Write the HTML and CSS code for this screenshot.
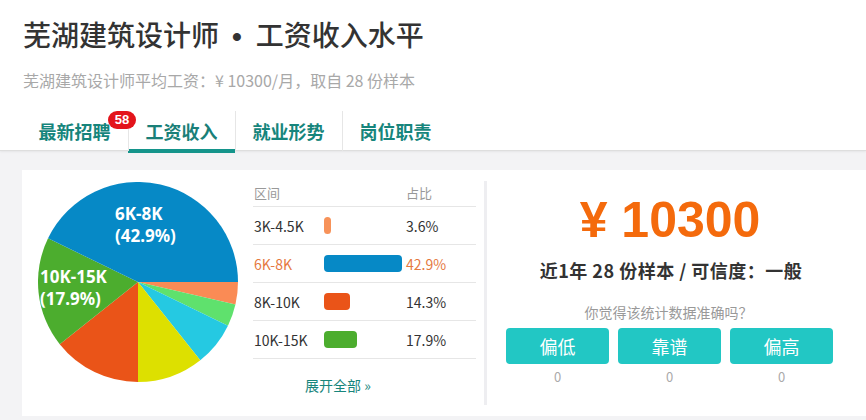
FILE: index.html
```html
<!DOCTYPE html>
<html lang="zh-CN">
<head>
<meta charset="utf-8">
<title>芜湖建筑设计师 • 工资收入水平</title>
<link rel="stylesheet" href="styles.css">
</head>
<body>
<header class="header">
  <h1 class="title">芜湖建筑设计师<span class="dot">•</span>工资收入水平</h1>
  <p class="subtitle">芜湖建筑设计师平均工资：¥ 10300/月，取自 28 份样本</p>
  <nav class="tabs">
    <a class="tab">最新招聘<span class="badge">58</span></a>
    <a class="tab tab-sep active">工资收入</a>
    <a class="tab tab-sep">就业形势</a>
    <a class="tab tab-sep">岗位职责</a>
  </nav>
</header>
<main class="card">
  <svg class="pie" width="200" height="200" viewBox="0 0 200 200">
    <path d="M100 100 L200 100 A100 100 0 0 1 197.44 122.5 Z" fill="#fa8b55"/>
    <path d="M100 100 L197.44 122.5 A100 100 0 0 1 189.96 143.68 Z" fill="#5fe16d"/>
    <path d="M100 100 L189.96 143.68 A100 100 0 0 1 162.25 178.26 Z" fill="#25c9e2"/>
    <path d="M100 100 L162.25 178.26 A100 100 0 0 1 100 200 Z" fill="#dde000"/>
    <path d="M100 100 L100 200 A100 100 0 0 1 21.74 162.25 Z" fill="#ea5418"/>
    <path d="M100 100 L21.74 162.25 A100 100 0 0 1 10.04 56.32 Z" fill="#4cad2e"/>
    <path d="M100 100 L10.04 56.32 A100 100 0 0 1 200 100 Z" fill="#0689c6"/>
    <text class="pie-label" x="77" y="38">6K-8K</text>
    <text class="pie-label" x="77" y="60">(42.9%)</text>
    <text class="pie-label" x="2" y="101">10K-15K</text>
    <text class="pie-label" x="2" y="123">(17.9%)</text>
  </svg>
  <section class="dist">
    <div class="row head"><span>区间</span><span></span><span>占比</span></div>
    <div class="row"><span>3K-4.5K</span><span><i class="bar" style="width:7px;background:#f79259"></i></span><span>3.6%</span></div>
    <div class="row hl"><span>6K-8K</span><span><i class="bar" style="width:78px;background:#0689c6"></i></span><span>42.9%</span></div>
    <div class="row"><span>8K-10K</span><span><i class="bar" style="width:26px;background:#ea5418"></i></span><span>14.3%</span></div>
    <div class="row"><span>10K-15K</span><span><i class="bar" style="width:33px;background:#4cad2e"></i></span><span>17.9%</span></div>
    <a class="more">展开全部 »</a>
  </section>
  <section class="summary">
    <div class="price">¥ 10300</div>
    <div class="meta">近1年 28 份样本 / 可信度：一般</div>
    <div class="ask">你觉得该统计数据准确吗？</div>
    <div class="votes">
      <div class="vote"><button class="btn">偏低</button><span class="count">0</span></div>
      <div class="vote"><button class="btn">靠谱</button><span class="count">0</span></div>
      <div class="vote"><button class="btn">偏高</button><span class="count">0</span></div>
    </div>
  </section>
</main>
</body>
</html>
```
FILE: styles.css
```css
* { box-sizing: border-box; }
html, body { margin: 0; padding: 0; }
body {
  background: #f3f3f5;
  font-family: "Noto Sans CJK SC", "Noto Sans", sans-serif;
  color: #333;
  width: 866px;
  height: 420px;
  overflow: hidden;
}
.header {
  background: #fff;
  height: 151px;
  padding: 14px 0 0 23px;
  border-bottom: 1px solid #dedede;
  box-shadow: 0 1px 2px rgba(0,0,0,0.06);
}
.title {
  margin: 0;
  font-size: 28px;
  line-height: 40px;
  font-weight: 500;
  color: #333;
}
.dot {
  font-family: "Liberation Sans", sans-serif;
  font-weight: bold;
  margin: 0 14px 0 13px;
}
.subtitle {
  margin: 12px 0 0;
  font-size: 16px;
  line-height: 22px;
  color: #a8a8a8;
}
.tabs {
  display: flex;
  margin: 19px 0 0 -2px;
  height: 43px;
}
.tab {
  position: relative;
  width: 107px;
  height: 43px;
  padding-top: 8px;
  text-align: center;
  font-size: 18px;
  line-height: 26px;
  font-weight: 700;
  color: #16857c;
}
.tab-sep::before {
  content: "";
  position: absolute;
  left: 0;
  top: 1px;
  height: 40px;
  border-left: 1px solid #e6e6e6;
}
.tab.active {
  border-bottom: 4px solid #14948b;
  color: #1a7f78;
}
.badge {
  position: absolute;
  z-index: 2;
  right: -8px;
  top: 1px;
  width: 28px;
  height: 18px;
  border-radius: 9px;
  background: #e3141b;
  color: #fff;
  font-family: "Liberation Sans", sans-serif;
  font-weight: bold;
  font-size: 13px;
  line-height: 18px;
  text-align: center;
}
.card {
  display: flex;
  margin: 19px 0 0 22px;
  height: 246px;
  background: #fff;
}
.pie {
  flex: none;
  margin: 12px 0 0 16px;
}
.pie-label {
  font-family: "Noto Sans", "DejaVu Sans", sans-serif;
  font-weight: bold;
  font-size: 17px;
  fill: #fff;
}
.dist {
  flex: none;
  width: 223px;
  margin: 8px 0 0 15px;
  display: flex;
  flex-direction: column;
}
.row {
  display: grid;
  grid-template-columns: 71px 82px 70px;
  align-items: center;
  height: 38px;
  border-bottom: 1px solid #e6e6e6;
  font-size: 14px;
  color: #333;
}
.row span:first-child { padding-left: 1px; }
.row.head {
  height: 29px;
  font-size: 13px;
  color: #999;
}
.row.hl { color: #e5793f; }
.bar {
  display: block;
  height: 17px;
  border-radius: 4px;
}
.more {
  align-self: flex-start;
  margin: 16px 0 0 52px;
  font-size: 14px;
  line-height: 20px;
  color: #17857c;
}
.summary {
  flex: none;
  margin: 11px 0 0 8px;
  height: 224px;
  width: 360px;
  border-left: 3px solid #eeeef1;
  padding: 14px 0 0 19px;
  display: flex;
  flex-direction: column;
}
.price, .meta, .ask { width: 325px; text-align: center; }
.price {
  font-family: "Liberation Sans", Arial, sans-serif;
  font-weight: bold;
  font-size: 50px;
  line-height: 50px;
  color: #f46a0c;
  padding-left: 3px;
}
.meta {
  margin-top: 13px;
  font-size: 18px;
  line-height: 24px;
  font-weight: bold;
  color: #333;
  letter-spacing: 0.5px;
  padding-left: 5px;
}
.ask {
  margin-top: 20px;
  font-size: 14px;
  line-height: 20px;
  color: #999;
}
.votes {
  margin-top: 6px;
  display: grid;
  grid-template-columns: repeat(3, 103px);
  gap: 9px;
}
.vote {
  display: flex;
  flex-direction: column;
  align-items: center;
}
.btn {
  width: 103px;
  height: 36px;
  border: 0;
  border-radius: 4px;
  background: #22c7c4;
  color: #fff;
  font-family: "Noto Sans CJK SC", sans-serif;
  font-size: 18px;
  padding: 0;
}
.count {
  margin-top: 4px;
  font-size: 13px;
  line-height: 18px;
  color: #aaa;
}
```
